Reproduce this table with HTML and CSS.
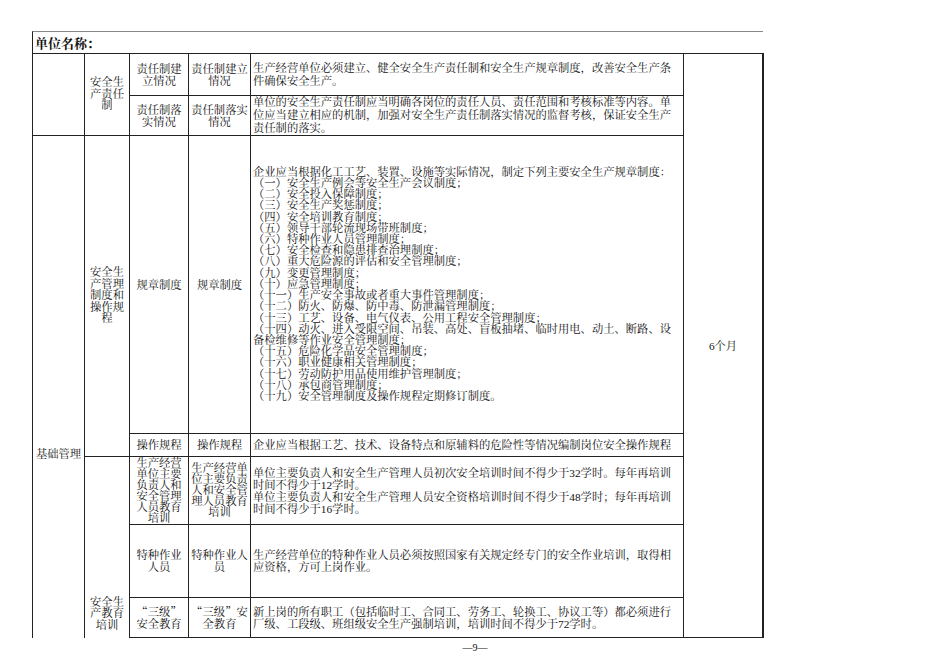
FILE: index.html
```html
<!DOCTYPE html>
<html lang="zh-CN">
<head>
<meta charset="utf-8">
<title>基础管理</title>
<link rel="stylesheet" href="styles.css">
</head>
<body>
<div class="page">
  <div class="unit">单位名称：</div>
  <table class="sheet">
    <colgroup>
      <col class="c1"><col class="c2"><col class="c3"><col class="c4"><col class="c5"><col class="c6">
    </colgroup>
    <tr class="r1">
      <td class="cat" rowspan="2"></td>
      <td class="sub" rowspan="2">安全生<br>产责任<br>制</td>
      <td class="lab">责任制建<br>立情况</td>
      <td class="lab">责任制建立<br>情况</td>
      <td class="txt loose">生产经营单位必须建立、健全安全生产责任制和安全生产规章制度，改善安全生产条<br>件确保安全生产。</td>
      <td class="period" rowspan="7">6个月</td>
    </tr>
    <tr class="r2">
      <td class="lab">责任制落<br>实情况</td>
      <td class="lab">责任制落实<br>情况</td>
      <td class="txt loose">单位的安全生产责任制应当明确各岗位的责任人员、责任范围和考核标准等内容。单<br>位应当建立相应的机制，加强对安全生产责任制落实情况的监督考核，保证安全生产<br>责任制的落实。</td>
    </tr>
    <tr class="r3">
      <td class="cat main" rowspan="5">基础管理</td>
      <td class="sub" rowspan="2">安全生<br>产管理<br>制度和<br>操作规<br>程</td>
      <td class="lab">规章制度</td>
      <td class="lab">规章制度</td>
      <td class="txt dense">企业应当根据化工工艺、装置、设施等实际情况，制定下列主要安全生产规章制度：<br>（一）安全生产例会等安全生产会议制度；<br>（二）安全投入保障制度；<br>（三）安全生产奖惩制度；<br>（四）安全培训教育制度；<br>（五）领导干部轮流现场带班制度；<br>（六）特种作业人员管理制度；<br>（七）安全检查和隐患排查治理制度；<br>（八）重大危险源的评估和安全管理制度；<br>（九）变更管理制度；<br>（十）应急管理制度；<br>（十一）生产安全事故或者重大事件管理制度；<br>（十二）防火、防爆、防中毒、防泄漏管理制度；<br>（十三）工艺、设备、电气仪表、公用工程安全管理制度；<br>（十四）动火、进入受限空间、吊装、高处、盲板抽堵、临时用电、动土、断路、设<br>备检维修等作业安全管理制度；<br>（十五）危险化学品安全管理制度；<br>（十六）职业健康相关管理制度；<br>（十七）劳动防护用品使用维护管理制度；<br>（十八）承包商管理制度；<br>（十九）安全管理制度及操作规程定期修订制度。</td>
    </tr>
    <tr class="r4">
      <td class="lab">操作规程</td>
      <td class="lab">操作规程</td>
      <td class="txt">企业应当根据工艺、技术、设备特点和原辅料的危险性等情况编制岗位安全操作规程</td>
    </tr>
    <tr class="r5">
      <td class="sub edu" rowspan="3">安全生<br>产教育<br>培训</td>
      <td class="lab tight">生产经营<br>单位主要<br>负责人和<br>安全管理<br>人员教育<br>培训</td>
      <td class="lab tight">生产经营单<br>位主要负责<br>人和安全管<br>理人员教育<br>培训</td>
      <td class="txt">单位主要负责人和安全生产管理人员初次安全培训时间不得少于32学时。每年再培训<br>时间不得少于12学时。<br>单位主要负责人和安全生产管理人员安全资格培训时间不得少于48学时；每年再培训<br>时间不得少于16学时。</td>
    </tr>
    <tr class="r6">
      <td class="lab">特种作业<br>人员</td>
      <td class="lab">特种作业人<br>员</td>
      <td class="txt">生产经营单位的特种作业人员必须按照国家有关规定经专门的安全作业培训，取得相<br>应资格，方可上岗作业。</td>
    </tr>
    <tr class="r7">
      <td class="lab"><span class="cjk">“</span>三级<span class="cjk">”</span><br>安全教育</td>
      <td class="lab"><span class="cjk">“</span>三级<span class="cjk">”</span>安<br>全教育</td>
      <td class="txt">新上岗的所有职工（包括临时工、合同工、劳务工、轮换工、协议工等）都必须进行<br>厂级、工段级、班组级安全生产强制培训，培训时间不得少于72学时。</td>
    </tr>
  </table>
</div>
<div class="pageno">—9—</div>
</body>
</html>
```

FILE: styles.css
```css
body {
  margin: 0;
  background: #ffffff;
  color: #111111;
  font-family: "Liberation Serif", "Noto Serif CJK SC", "Noto Sans CJK SC", serif;
}

.page {
  padding: 31px 0 0 32px;
}

.unit {
  box-sizing: border-box;
  width: 731px;
  height: 22px;
  border-top: 1px solid #888888;
  border-left: 1px solid #222222;
  padding-left: 2px;
  font-size: 13px;
  font-weight: bold;
  line-height: 21px;
  font-family: "Noto Serif CJK SC", "Noto Sans CJK SC", serif;
}

.sheet {
  border-collapse: separate;
  border-spacing: 0;
  table-layout: fixed;
  width: 732px;
  border-top: 1px solid #222222;
  border-left: 1px solid #222222;
  font-size: 11.3px;
}

.c1 { width: 52px; }
.c2 { width: 45px; }
.c3 { width: 59px; }
.c4 { width: 62px; }
.c5 { width: 433px; }
.c6 { width: 80px; }

.r1 { height: 42px; }
.r2 { height: 38px; }
.r3 { height: 298px; }
.r4 { height: 23px; }
.r5 { height: 68px; }
.r6 { height: 73px; }
.r7 { height: 40px; }

.sheet td {
  box-sizing: border-box;
  border: 0;
  border-right: 1px solid #222222;
  border-bottom: 1px solid #222222;
  padding: 0;
  text-align: center;
  vertical-align: middle;
  line-height: 12px;
  overflow: hidden;
}

.sheet td.tight { line-height: 11px; }

.sheet td.txt {
  text-align: left;
  padding-left: 2px;
  white-space: nowrap;
  line-height: 12px;
}

.sheet td.loose { line-height: 13px; }
.sheet td.dense { line-height: 11.2px; }

.sheet td.sub { line-height: 11.5px; }

.sheet td.main {
  vertical-align: bottom;
  padding-bottom: 178px;
  border-bottom: none;
}

.sheet td.edu {
  vertical-align: bottom;
  padding-bottom: 7px;
  border-bottom: none;
}

.sheet td.period {
  border-right-width: 2px;
}

.cjk {
  font-family: "Noto Serif CJK SC", "Noto Sans CJK SC", sans-serif;
}

.pageno {
  text-align: center;
  font-size: 10px;
  line-height: 12px;
  margin-top: 4px;
}
```
